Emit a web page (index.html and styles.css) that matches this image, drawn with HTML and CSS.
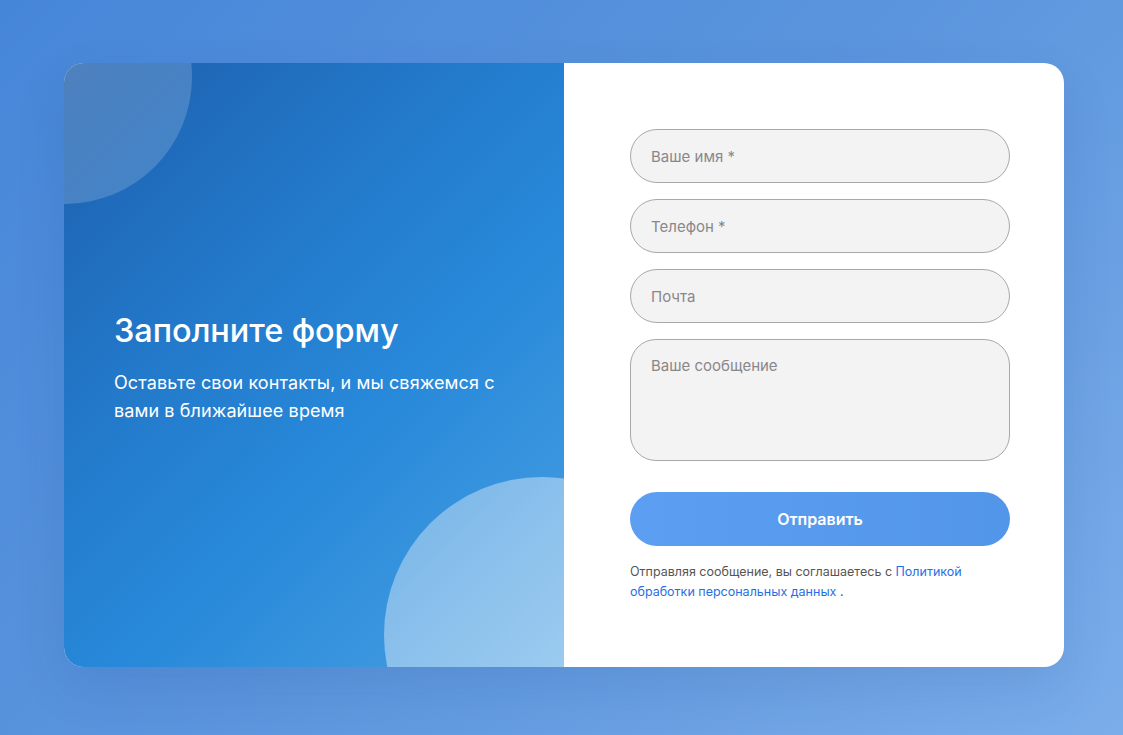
FILE: index.html
```
<!DOCTYPE html>
<html lang="ru">
<head>
<meta charset="utf-8">
<title>Заполните форму</title>
<link rel="stylesheet" href="styles.css">
</head>
<body>
<div class="page">
  <div class="card">
    <div class="intro">
      <div class="blob blob-top"></div>
      <div class="blob blob-bottom"></div>
      <div class="intro-text">
        <h1 class="title">Заполните форму</h1>
        <p class="subtitle">Оставьте свои контакты, и мы свяжемся с вами в ближайшее время</p>
      </div>
    </div>
    <div class="side">
      <form class="form">
        <input class="field" type="text" placeholder="Ваше имя *">
        <input class="field" type="tel" placeholder="Телефон *">
        <input class="field" type="email" placeholder="Почта">
        <textarea class="field area" placeholder="Ваше сообщение"></textarea>
        <button class="submit" type="button">Отправить</button>
        <p class="policy">Отправляя сообщение, вы соглашаетесь с <a class="policy-link" href="#">Политикой обработки персональных данных</a> .</p>
      </form>
    </div>
  </div>
</div>
</body>
</html>
```
FILE: styles.css
```
* { box-sizing: border-box; }
html, body { margin: 0; padding: 0; }
body {
  width: 1123px;
  height: 735px;
  overflow: hidden;
  font-family: Inter, "Noto Sans", sans-serif;
  background: linear-gradient(135deg, #4686d9 0%, #5b95dd 50%, #7badea 100%);
}
.page {
  padding: 63px 0 0 64px;
}
.card {
  width: 1000px;
  height: 604px;
  display: flex;
  border-radius: 20px;
  overflow: hidden;
  background: #fff;
  box-shadow: 0 20px 50px rgba(20, 60, 120, 0.12);
}
.intro {
  position: relative;
  width: 500px;
  flex: none;
  overflow: hidden;
  display: flex;
  align-items: center;
  padding: 6px 50px 0;
  background: linear-gradient(135deg, #1d5ead 0%, #2379ca 35%, #2889da 60%, #4aa0e2 100%);
  color: #fff;
}
.blob {
  position: absolute;
  border-radius: 50%;
}
.blob-top {
  width: 254px;
  height: 254px;
  left: -126px;
  top: -113px;
  background: linear-gradient(135deg, rgba(200,190,180,0.5) 0%, rgba(255,255,255,0.2) 55%, rgba(255,255,255,0.15) 100%);
}
.blob-bottom {
  width: 316px;
  height: 316px;
  left: 320px;
  top: 414px;
  background: linear-gradient(135deg, rgba(255,255,255,0.35) 0%, rgba(255,255,255,0.45) 60%, rgba(255,255,255,0.5) 100%);
}
.intro-text {
  position: relative;
}
.title {
  margin: 0 0 18px;
  font-size: 32.5px;
  line-height: 40px;
  font-weight: 500;
  letter-spacing: -0.1px;
}
.subtitle {
  margin: 0;
  font-size: 18px;
  line-height: 28px;
  font-weight: 400;
  letter-spacing: 0.1px;
}
.side {
  flex: 1;
  display: flex;
  align-items: center;
  padding-left: 66px;
}
.form {
  width: 380px;
  display: flex;
  flex-direction: column;
  gap: 16px;
  margin-top: 1px;
}
.field {
  width: 100%;
  height: 54px;
  border: 1px solid #aaa6aa;
  border-radius: 27px;
  background: #f3f3f3;
  padding: 0 20px;
  font-family: inherit;
  font-size: 15px;
  color: #333;
  outline: none;
}
.field::placeholder { color: #8a8789; }
.area {
  height: 122px;
  padding-top: 15px;
  resize: none;
  border-radius: 26px;
  line-height: 22px;
}
.submit {
  margin-top: 15px;
  height: 54px;
  border: none;
  border-radius: 27px;
  background: linear-gradient(90deg, #5b9ef2 0%, #5296ea 100%);
  color: #fff;
  font-family: inherit;
  font-size: 16px;
  font-weight: 600;
}
.policy {
  margin: 0;
  font-size: 12.5px;
  line-height: 20px;
  color: #555;
}
.policy-link {
  color: #1f6fe6;
  text-decoration: none;
}
```
